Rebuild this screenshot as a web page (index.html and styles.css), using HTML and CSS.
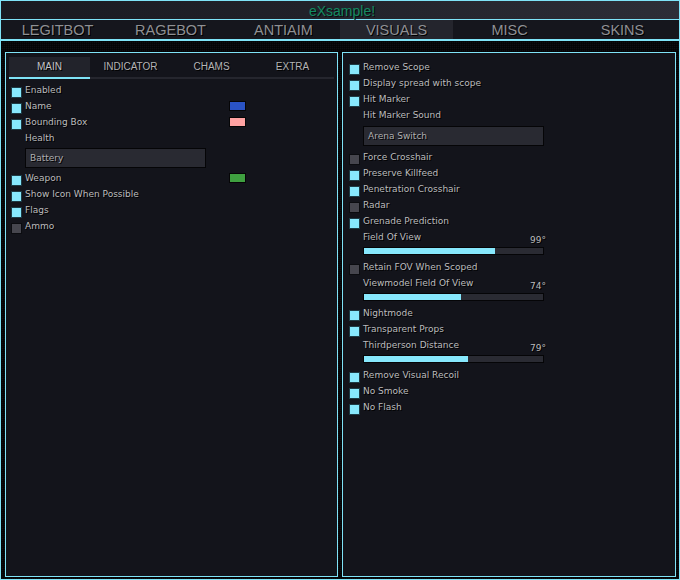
FILE: index.html
```html
<!DOCTYPE html>
<html>
<head>
<meta charset="utf-8">
<link rel="stylesheet" href="styles.css">
</head>
<body>
<div class="window">
  <div class="titlebar"><span class="title">eXsample!</span></div>
  <div class="tabs">
    <div class="tab">LEGITBOT</div>
    <div class="tab">RAGEBOT</div>
    <div class="tab">ANTIAIM</div>
    <div class="tab active">VISUALS</div>
    <div class="tab">MISC</div>
    <div class="tab">SKINS</div>
  </div>
  <div class="content">
    <div class="panel left">
      <div class="subtabs">
        <div class="subtab active">MAIN</div>
        <div class="subtab">INDICATOR</div>
        <div class="subtab">CHAMS</div>
        <div class="subtab">EXTRA</div>
      </div>
      <div class="opts opts-left">
        <div class="row"><span class="cb on"></span><span class="lbl">Enabled</span></div>
        <div class="row swrow"><span class="cb on"></span><span class="lbl">Name</span><span class="swatch blue"></span></div>
        <div class="row swrow"><span class="cb on"></span><span class="lbl">Bounding Box</span><span class="swatch pink"></span></div>
        <div class="row"><span class="lbl plain">Health</span></div>
        <div class="select sel-left">Battery</div>
        <div class="row swrow"><span class="cb on"></span><span class="lbl">Weapon</span><span class="swatch green"></span></div>
        <div class="row"><span class="cb on"></span><span class="lbl">Show Icon When Possible</span></div>
        <div class="row"><span class="cb on"></span><span class="lbl">Flags</span></div>
        <div class="row"><span class="cb"></span><span class="lbl">Ammo</span></div>
      </div>
    </div>
    <div class="panel right">
      <div class="opts opts-right">
        <div class="row"><span class="cb on"></span><span class="lbl">Remove Scope</span></div>
        <div class="row"><span class="cb on"></span><span class="lbl">Display spread with scope</span></div>
        <div class="row"><span class="cb on"></span><span class="lbl">Hit Marker</span></div>
        <div class="row"><span class="lbl plain">Hit Marker Sound</span></div>
        <div class="select sel-right">Arena Switch</div>
        <div class="row"><span class="cb"></span><span class="lbl">Force Crosshair</span></div>
        <div class="row"><span class="cb on"></span><span class="lbl">Preserve Killfeed</span></div>
        <div class="row"><span class="cb on"></span><span class="lbl">Penetration Crosshair</span></div>
        <div class="row"><span class="cb"></span><span class="lbl">Radar</span></div>
        <div class="row"><span class="cb on"></span><span class="lbl">Grenade Prediction</span></div>
        <div class="row slrow"><span class="lbl plain">Field Of View</span><span class="val">99°</span></div>
        <div class="slider"><div class="fill" style="width:131px"></div></div>
        <div class="row"><span class="cb"></span><span class="lbl">Retain FOV When Scoped</span></div>
        <div class="row slrow"><span class="lbl plain">Viewmodel Field Of View</span><span class="val">74°</span></div>
        <div class="slider"><div class="fill" style="width:97px"></div></div>
        <div class="row"><span class="cb on"></span><span class="lbl">Nightmode</span></div>
        <div class="row"><span class="cb on"></span><span class="lbl">Transparent Props</span></div>
        <div class="row slrow"><span class="lbl plain">Thirdperson Distance</span><span class="val">79°</span></div>
        <div class="slider"><div class="fill" style="width:104px"></div></div>
        <div class="row"><span class="cb on"></span><span class="lbl">Remove Visual Recoil</span></div>
        <div class="row"><span class="cb on"></span><span class="lbl">No Smoke</span></div>
        <div class="row"><span class="cb on"></span><span class="lbl">No Flash</span></div>
      </div>
    </div>
  </div>
</div>
</body>
</html>
```
FILE: styles.css
```css
* { box-sizing: border-box; }
html, body { margin: 0; padding: 0; background: #0c0d11; }
body { width: 680px; height: 580px; font-family: "DejaVu Sans", sans-serif; }

.window {
  width: 680px;
  height: 580px;
  border: 1px solid #7fe3f7;
  display: flex;
  flex-direction: column;
  background: #0c0d11;
}

.titlebar {
  height: 19px;
  border-bottom: 1px solid #7fe3f7;
  background: linear-gradient(90deg, #191a21 0%, #22232b 50%, #2d2e37 100%);
  display: flex;
  align-items: center;
  justify-content: center;
  padding-left: 4px;
  padding-top: 1px;
}
.title {
  font-family: "Liberation Sans", Arial, sans-serif;
  font-size: 14px;
  color: #128a62;
  line-height: 18px;
  text-shadow: 1px 1px 0 #0a0b0e;
}

.tabs {
  height: 21px;
  border-bottom: 2px solid #7fe3f7;
  display: grid;
  grid-template-columns: repeat(6, 113px);
  background: #15161d;
}
.tab {
  font-family: "Liberation Sans", Arial, sans-serif;
  font-size: 14.5px;
  color: #8f9094;
  text-align: center;
  padding-top: 2px;
  line-height: 17px;
  text-shadow: 1px 1px 0 #000;
}
.tab.active { background: #24252d; }

.content {
  flex: 1;
  display: flex;
  gap: 4px;
  padding: 11px 3px 2px 4px;
  background-color: #0d0e12;
  background-image:
    linear-gradient(90deg, rgba(0,0,0,0.55) 1px, transparent 1px),
    linear-gradient(rgba(0,0,0,0.55) 1px, transparent 1px);
  background-size: 2px 2px;
}

.panel {
  border: 1px solid #7fe3f7;
  background: #13141b;
}
.panel.left { width: 333px; padding: 4px 3px 0 3px; }
.panel.right { width: 334px; padding: 6px 0 0 6px; }

.subtabs {
  display: grid;
  grid-template-columns: repeat(4, 81px);
  border-bottom: 2px solid #25262e;
  height: 22px;
}
.subtab {
  font-family: "Liberation Sans", Arial, sans-serif;
  font-size: 10px;
  color: #b4b4b6;
  text-align: center;
  line-height: 20px;
  height: 22px;
  text-shadow: 1px 1px 0 #000;
}
.subtab.active {
  background: #22232b;
  border-bottom: 2px solid #7fe3f7;
  color: #c4c4c6;
}

.opts { display: flex; flex-direction: column; }
.opts-left { padding: 3px 0 0 2px; }

.row {
  height: 16px;
  display: flex;
  align-items: flex-start;
  font-size: 9px;
  line-height: 16px;
  color: #bcbcbe;
  text-shadow: 1px 1px 0 #000;
  white-space: nowrap;
}
.cb {
  width: 11px;
  height: 11px;
  margin-top: 5px;
  background: #46464e;
  border: 1px solid #0b0c10;
  flex: none;
}
.cb.on { background: #87e8fd; border-color: #1d3a44; }
.lbl { margin-left: 3px; }
.lbl.plain { margin-left: 14px; }

.swrow { width: 235px; }
.swatch {
  margin-left: auto;
  margin-top: 3px;
  width: 17px;
  height: 10px;
  border: 1px solid #050506;
  flex: none;
}
.swatch.blue { background: #2a53c4; }
.swatch.pink { background: #ffa2a2; }
.swatch.green { background: #3fa040; }

.select {
  height: 20px;
  border: 1px solid #050507;
  background: #292a32;
  font-size: 9px;
  line-height: 18px;
  color: #aeaeb0;
  padding-left: 4px;
  text-shadow: 1px 1px 0 #000;
}
.sel-left { width: 181px; margin: 2px 0 2px 14px; }
.sel-right { width: 181px; margin: 3px 0 3px 14px; }

.slrow { width: 197px; }
.val { margin-left: auto; padding-top: 3px; }

.slider {
  width: 181px;
  height: 8px;
  margin: 2px 0 4px 14px;
  border: 1px solid #050507;
  background: #2a2b33;
}
.fill { height: 100%; background: #87e8fd; }
```
